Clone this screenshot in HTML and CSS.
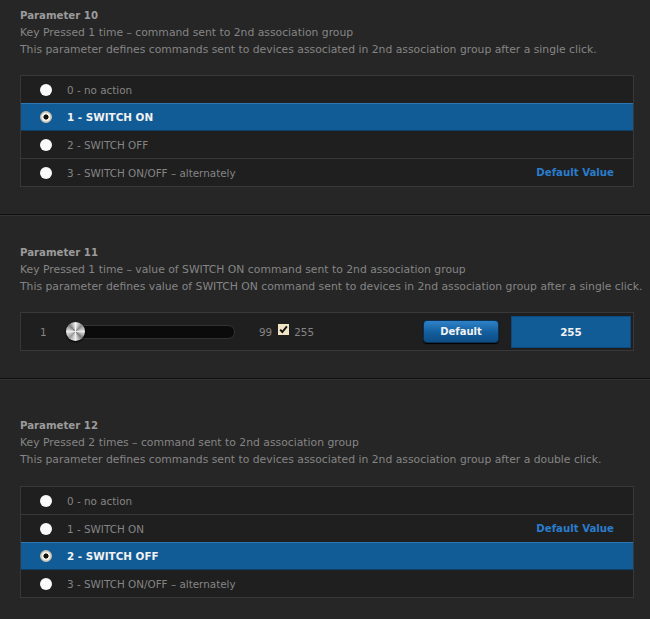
FILE: index.html
```html
<!DOCTYPE html>
<html>
<head>
<meta charset="utf-8">
<link rel="stylesheet" href="styles.css">
</head>
<body>
<section class="param p-first">
  <div class="title">Parameter 10</div>
  <div class="desc">Key Pressed 1 time – command sent to 2nd association group</div>
  <div class="desc">This parameter defines commands sent to devices associated in 2nd association group after a single click.</div>
  <div class="options list-gap">
    <div class="opt"><span class="radio"></span><span class="label">0 - no action</span></div>
    <div class="opt sel"><span class="radio on"></span><span class="label">1 - SWITCH ON</span></div>
    <div class="opt"><span class="radio"></span><span class="label">2 - SWITCH OFF</span></div>
    <div class="opt"><span class="radio"></span><span class="label">3 - SWITCH ON/OFF – alternately</span><span class="defval">Default Value</span></div>
  </div>
</section>
<section class="param p-second">
  <div class="title">Parameter 11</div>
  <div class="desc">Key Pressed 1 time – value of SWITCH ON command sent to 2nd association group</div>
  <div class="desc">This parameter defines value of SWITCH ON command sent to devices in 2nd association group after a single click.</div>
  <div class="slider-box">
    <span class="min">1</span>
    <div class="track"><span class="thumb"></span></div>
    <span class="max">99</span>
    <span class="check"><svg width="11" height="11" viewBox="0 0 11 11"><path d="M2.2 5.6 L4.3 8 L8.9 2.4" fill="none" stroke="#111" stroke-width="1.9"/></svg></span>
    <span class="v255">255</span>
    <span class="spacer"></span>
    <button class="btn">Default</button>
    <div class="valbox">255</div>
  </div>
</section>
<section class="param p-third">
  <div class="title">Parameter 12</div>
  <div class="desc">Key Pressed 2 times – command sent to 2nd association group</div>
  <div class="desc">This parameter defines commands sent to devices associated in 2nd association group after a double click.</div>
  <div class="options list-gap3">
    <div class="opt"><span class="radio"></span><span class="label">0 - no action</span></div>
    <div class="opt"><span class="radio"></span><span class="label">1 - SWITCH ON</span><span class="defval">Default Value</span></div>
    <div class="opt sel"><span class="radio on"></span><span class="label">2 - SWITCH OFF</span></div>
    <div class="opt"><span class="radio"></span><span class="label">3 - SWITCH ON/OFF – alternately</span></div>
  </div>
</section>
</body>
</html>
```
FILE: styles.css
```css
html, body {
  margin: 0;
  padding: 0;
  background: #262626;
  font-family: "DejaVu Sans", Verdana, sans-serif;
  font-size: 10.8px;
  color: #858585;
  height: 619px;
  overflow: hidden;
}
.param {
  padding-left: 20px;
  padding-right: 16px;
  border-bottom: 1px solid #0f0f0f;
  border-top: 1px solid #333;
}
.p-first { padding-top: 7px; padding-bottom: 27px; border-top: none; }
.p-second { padding-top: 28px; padding-bottom: 27px; }
.p-third { padding-top: 37px; border-bottom: none; padding-bottom: 0; }
.title {
  font-weight: bold;
  font-size: 10.2px;
  color: #9b9b9b;
  line-height: 17px;
}
.desc {
  line-height: 17px;
  white-space: nowrap;
}
.list-gap { margin-top: 17px; }
.list-gap3 { margin-top: 18px; }
.options {
  border: 1px solid #383838;
  background: #1f1f1f;
  font-size: 10.4px;
}
.opt {
  display: flex;
  align-items: center;
  height: 27px;
  border-top: 1px solid #383838;
  padding-left: 19px;
  padding-right: 19px;
}
.opt:first-child { border-top: none; }
.opt.sel {
  background: #115b96;
  border-top: 1px solid #2f78b4;
  border-bottom: 1px solid #0c3f68;
  height: 26px;
  color: #f2f2f2;
  font-weight: bold;
}
.opt.sel + .opt { border-top: none; }
.radio {
  width: 12px;
  height: 12px;
  border-radius: 50%;
  background: #fafafa;
  flex: none;
  box-sizing: border-box;
}
.radio.on {
  background: radial-gradient(circle, #111 0 2.3px, #f5f0e6 2.8px 4px, #d9d2c6 4.5px);
  border: 1px solid #c9c2b5;
}
.label { margin-left: 15px; }
.defval {
  margin-left: auto;
  color: #2a7ccc;
  font-weight: bold;
  font-size: 10.2px;
}
.slider-box {
  margin-top: 17px;
  border: 1px solid #383838;
  background: #1f1f1f;
  height: 37px;
  display: flex;
  align-items: center;
  padding-left: 19px;
  padding-right: 2px;
  font-size: 10.4px;
}
.min { width: 26px; }
.track {
  position: relative;
  width: 167px;
  height: 12px;
  background: #0b0b0b;
  border: 1px solid #333;
  border-radius: 7px;
}
.thumb {
  position: absolute;
  left: -1px;
  top: -4px;
  width: 19px;
  height: 19px;
  border-radius: 50%;
  background: conic-gradient(#f4f4f4, #8a8a8a, #e8e8e8, #7a7a7a, #f0f0f0, #9a9a9a, #ececec, #808080, #f4f4f4);
  box-shadow: 0 1px 2px #000;
}
.max { margin-left: 24px; }
.check {
  margin-left: 6px;
  width: 11px;
  height: 11px;
  background: #efe4c4;
  display: flex;
  margin-top: -4px;
}
.v255 { margin-left: 5px; }
.spacer { flex: 1; }
.btn {
  width: 76px;
  height: 23px;
  border: 1px solid #0a2f50;
  border-radius: 4px;
  background: linear-gradient(#2f82c8, #135d9c 55%, #0e4d84);
  color: #f2f2f2;
  font-family: "DejaVu Sans", Verdana, sans-serif;
  font-size: 10px;
  font-weight: bold;
  box-shadow: 0 1px 1px #000;
  padding: 0;
}
.valbox {
  margin-left: 12px;
  width: 118px;
  height: 30px;
  background: #115b96;
  border: 1px solid #0d4a7c;
  color: #f2f2f2;
  font-weight: bold;
  display: flex;
  align-items: center;
  justify-content: center;
}
```
